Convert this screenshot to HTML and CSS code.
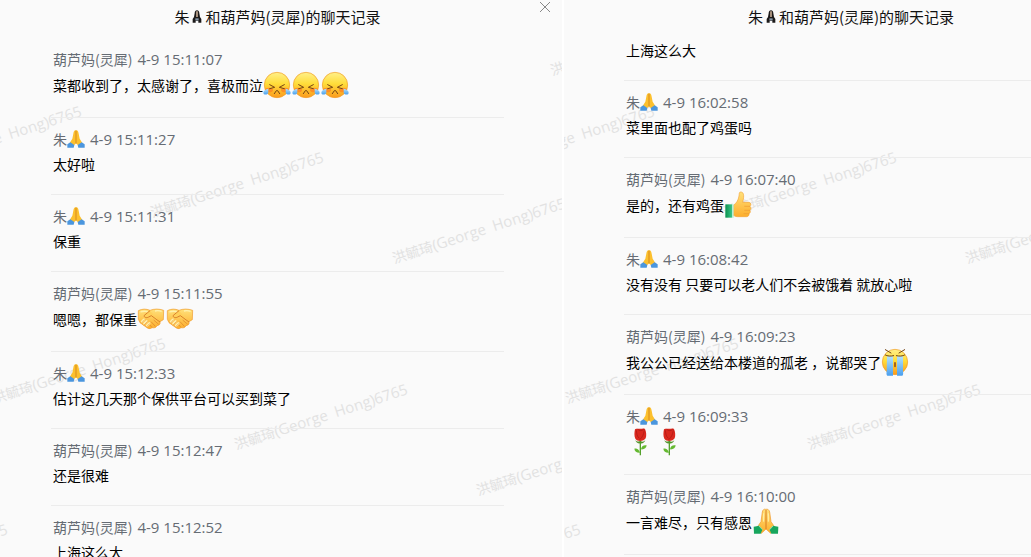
FILE: index.html
```html
<!DOCTYPE html>
<html lang="zh-CN">

<head>
    <meta charset="utf-8">
    <title>聊天记录</title>
    <link rel="stylesheet" href="styles.css">
</head>

<body>
    <!-- emoji sprites -->
    <svg class="sprites" aria-hidden="true">
        <defs>
            <linearGradient id="face" x1="0" y1="0" x2="0" y2="1">
                <stop offset="0" stop-color="#fff08a" />
                <stop offset=".45" stop-color="#ffdd3a" />
                <stop offset="1" stop-color="#fb9a1c" />
            </linearGradient>
            <linearGradient id="skin" x1="0" y1="0" x2="0" y2="1">
                <stop offset="0" stop-color="#ffe07a" />
                <stop offset="1" stop-color="#fdae2c" />
            </linearGradient>
            <linearGradient id="tear" x1="0" y1="0" x2="0" y2="1">
                <stop offset="0" stop-color="#b4e2fb" />
                <stop offset="1" stop-color="#4a9fee" />
            </linearGradient>
            <linearGradient id="sleeve" x1="0" y1="0" x2="1" y2="0">
                <stop offset="0" stop-color="#0a9250" />
                <stop offset="1" stop-color="#3cc487" />
            </linearGradient>

            <symbol id="weep" viewBox="0 0 84 84">
                <circle cx="42" cy="42" r="38" fill="url(#face)" stroke="#f09a24" stroke-width="2" />
                <ellipse cx="18" cy="57" rx="12" ry="7" fill="#ff7a22" opacity=".7" />
                <ellipse cx="66" cy="57" rx="12" ry="7" fill="#ff7a22" opacity=".7" />
                <path d="M20 41l15 8-15 4M64 41l-15 8 15 4" fill="none" stroke="#754413" stroke-width="3" stroke-linecap="round" />
                <path d="M34 68l6-9h4l6 9" fill="none" stroke="#754413" stroke-width="3" stroke-linecap="round" />
                <path d="M16 53C8 54 1 59 1 65c0 8 13 7 15 0z" fill="url(#tear)" />
                <path d="M68 53c8 1 15 6 15 12 0 8-13 7-15 0z" fill="url(#tear)" />
            </symbol>

            <symbol id="sob" viewBox="0 0 84 84">
                <circle cx="42" cy="42" r="38" fill="url(#face)" stroke="#f09a24" stroke-width="2" />
                <path d="M18 25h18v58H19c-3-2-3-8-2-14zM48 25h18v44c1 6 1 12-2 14H48z" fill="url(#tear)" />
                <path d="M13 5l17 10M71 5L54 15" fill="none" stroke="#754413" stroke-width="3" stroke-linecap="round" />
                <path d="M13 21c5 4 18 4 25 2M71 21c-5 4-18 4-25 2" fill="none" stroke="#754413" stroke-width="3" stroke-linecap="round" />
                <rect x="39" y="42" width="6" height="16" rx="3" fill="#a5651a" />
            </symbol>

            <symbol id="shake" viewBox="0 0 84 84">
                <path d="M4 17c12-6 23-6 35-1 13-5 27-5 41 0l-1 28-10 6c2 8-3 11-9 12-3 7-10 7-15 6-6 5-12 3-18-2L9 53 4 43z" fill="url(#skin)" stroke="#f09a2c" stroke-width="2" />
                <path d="M39 17L22 31c-2 6 6 9 13 5l8-4 26 19" fill="#ffd05b" stroke="#d9802a" stroke-width="3" stroke-linejoin="round" />
                <path d="M51 46l13 11M43 51l11 12M35 56l9 10" fill="none" stroke="#d9802a" stroke-width="2" stroke-linecap="round" />
                <path d="M15 50l6-6M22 56l7-7M30 62l7-7" fill="none" stroke="#fff0ad" stroke-width="7" stroke-linecap="round" />
                <path d="M13 55l11-12M20 61l12-12M28 66l11-11" fill="none" stroke="#e8963a" stroke-width="2" />
                <path d="M10 21c8-3 15-3 22-1M54 18c8-2 14-1 20 1" fill="none" stroke="#fff1ae" stroke-width="4" />
            </symbol>

            <symbol id="thumb" viewBox="0 0 84 84">
                <path d="M28 43c9-6 15-15 17-28 1-7 0-12 5-12 9 0 11 10 7 27l-1 4h19c7 2 7 9 3 12 4 3 4 9 0 12 2 4 1 8-3 10 1 5-2 8-7 9H40c-6 0-9-3-13-4z" fill="url(#skin)" stroke="#f3a436" stroke-width="2" />
                <path d="M62 46h15M62 58h15M60 68h14" stroke="#ec9a34" stroke-width="2" stroke-linecap="round" />
                <path d="M4 40h20v40H4z" fill="url(#sleeve)" />
                <path d="M24 40h5v40h-5z" fill="#b8ecd2" />
            </symbol>

            <symbol id="pray" viewBox="0 0 84 84">
                <path d="M41 4c-5-2-9 2-10 8l-4 29-13 19 14 16 14-13 14 13 14-16-13-19-4-29c-1-6-6-10-12-8z" fill="url(#skin)" stroke="#ee9526" stroke-width="2" />
                <path d="M42 6v57" stroke="#d87a20" stroke-width="3" />
                <path d="M35 16v25M49 16v25" stroke="#fff0b0" stroke-width="3" />
                <path d="M5 56l17-3 9 12-5 12H6z" fill="#17a65d" />
                <path d="M79 56l-17-3-9 12 5 12h20z" fill="#17a65d" />
                <path d="M20 53l11 12M64 53L53 65" stroke="#8ee0b6" stroke-width="3" />
            </symbol>

            <symbol id="pray-blue" viewBox="0 0 54 54">
                <path d="M27 1c-5-1-7 4-8 10l-3 15-8 13 11 9 8-8 8 8 11-9-8-13-3-15c-1-6-3-11-8-10z" fill="#fcc02e" />
                <path d="M27 2v39" stroke="#d78a1c" stroke-width="3" />
                <path d="M1 43l9-6 12 8-2 8H1zM53 43l-9-6-12 8 2 8h19z" fill="#4b96de" />
            </symbol>

            <symbol id="pray-mono" viewBox="0 0 30 39">
                <path d="M15 1c-4 0-7 3-7 9L6 21 2 27v11h9v-6h8v6h9V27l-4-6-2-11c0-6-3-9-7-9z" fill="#1c1a1a" />
                <path d="M15 4v17" stroke="#a58f7c" stroke-width="6" />
                <path d="M10 25h10v6H10z" fill="#8496a8" />
            </symbol>

            <symbol id="rose" viewBox="0 0 84 84">
                <path d="M43 38v44" stroke="#55a12c" stroke-width="4" />
                <path d="M42 74c-3-10-10-14-17-12 1 9 8 13 17 12zM45 64c1-9 8-14 17-12-1 8-7 13-17 12z" fill="#65b931" />
                <path d="M27 4c5-3 8-1 12-2 7 2 12-2 18 1 4 9 5 20 2 28-5 9-25 11-31 1-4-8-3-20-1-28z" fill="#da281e" />
                <path d="M31 7c1 10 2 18 9 24M55 7c-2 13-6 21-14 28M35 4c6 5 13 5 18 0" fill="none" stroke="#a81713" stroke-width="2" />
                <path d="M28 36c5 6 10 6 15 2 5 4 10 5 15-2-2 8-8 11-15 10-7 1-13-2-15-10z" fill="#53952c" />
            </symbol>
        </defs>
    </svg>

    <main class="records">
        <section class="panel">
            <div class="watermarks" aria-hidden="true">
                <span class="mark mark-a">洪毓琦<span class="latin">(George&nbsp; Hong)6765</span></span>
                <span class="mark mark-b">洪毓琦<span class="latin">(George&nbsp; Hong)6765</span></span>
                <span class="mark mark-c">洪毓琦<span class="latin">(George&nbsp; Hong)6765</span></span>
                <span class="mark mark-d">洪毓琦<span class="latin">(George&nbsp; Hong)6765</span></span>
                <span class="mark mark-e">洪毓琦<span class="latin">(George&nbsp; Hong)6765</span></span>
                <span class="mark mark-f">洪毓琦<span class="latin">(George&nbsp; Hong)6765</span></span>
                <span class="mark mark-g">洪毓琦<span class="latin">(George&nbsp; Hong)6765</span></span>
                <span class="mark mark-h">洪毓琦<span class="latin">(George&nbsp; Hong)6765</span></span>
            </div>
            <button class="close" type="button" aria-label="关闭">
                <svg viewBox="0 0 12 12"><path d="M1 1l10 10M11 1L1 11" /></svg>
            </button>
            <div class="panel-body">
                <h1 class="title">朱<svg class="title-emoji"><use href="#pray-mono" /></svg>和葫芦妈(灵犀)的聊天记录</h1>
                <ul class="list list-top">
                    <li class="item">
                        <div class="meta"><span>葫芦妈(灵犀)</span><time>4-9 15:11:07</time></div>
                        <div class="message has-emoji">菜都收到了，太感谢了，喜极而泣<svg class="emoji"><use href="#weep" /></svg><svg class="emoji"><use href="#weep" /></svg><svg class="emoji"><use href="#weep" /></svg></div>
                    </li>
                    <li class="item">
                        <div class="meta"><span class="name">朱<svg class="name-emoji"><use href="#pray-blue" /></svg></span><time>4-9 15:11:27</time></div>
                        <div class="message">太好啦</div>
                    </li>
                    <li class="item">
                        <div class="meta"><span class="name">朱<svg class="name-emoji"><use href="#pray-blue" /></svg></span><time>4-9 15:11:31</time></div>
                        <div class="message">保重</div>
                    </li>
                    <li class="item">
                        <div class="meta"><span>葫芦妈(灵犀)</span><time>4-9 15:11:55</time></div>
                        <div class="message has-emoji">嗯嗯，都保重<svg class="emoji"><use href="#shake" /></svg><svg class="emoji"><use href="#shake" /></svg></div>
                    </li>
                    <li class="item">
                        <div class="meta"><span class="name">朱<svg class="name-emoji"><use href="#pray-blue" /></svg></span><time>4-9 15:12:33</time></div>
                        <div class="message">估计这几天那个保供平台可以买到菜了</div>
                    </li>
                    <li class="item">
                        <div class="meta"><span>葫芦妈(灵犀)</span><time>4-9 15:12:47</time></div>
                        <div class="message">还是很难</div>
                    </li>
                    <li class="item">
                        <div class="meta"><span>葫芦妈(灵犀)</span><time>4-9 15:12:52</time></div>
                        <div class="message">上海这么大</div>
                    </li>
                </ul>
            </div>
        </section>

        <section class="panel panel-wide">
            <div class="watermarks" aria-hidden="true">
                <span class="mark mark-a">洪毓琦<span class="latin">(George&nbsp; Hong)6765</span></span>
                <span class="mark mark-b">洪毓琦<span class="latin">(George&nbsp; Hong)6765</span></span>
                <span class="mark mark-c">洪毓琦<span class="latin">(George&nbsp; Hong)6765</span></span>
                <span class="mark mark-f">洪毓琦<span class="latin">(George&nbsp; Hong)6765</span></span>
                <span class="mark mark-g">洪毓琦<span class="latin">(George&nbsp; Hong)6765</span></span>
                <span class="mark mark-h">洪毓琦<span class="latin">(George&nbsp; Hong)6765</span></span>
            </div>
            <div class="panel-body">
                <h1 class="title">朱<svg class="title-emoji"><use href="#pray-mono" /></svg>和葫芦妈(灵犀)的聊天记录</h1>
                <ul class="list">
                    <li class="item item-cut">
                        <div class="message">上海这么大</div>
                    </li>
                    <li class="item">
                        <div class="meta"><span class="name">朱<svg class="name-emoji"><use href="#pray-blue" /></svg></span><time>4-9 16:02:58</time></div>
                        <div class="message">菜里面也配了鸡蛋吗</div>
                    </li>
                    <li class="item">
                        <div class="meta"><span>葫芦妈(灵犀)</span><time>4-9 16:07:40</time></div>
                        <div class="message has-emoji">是的，还有鸡蛋<svg class="emoji"><use href="#thumb" /></svg></div>
                    </li>
                    <li class="item">
                        <div class="meta"><span class="name">朱<svg class="name-emoji"><use href="#pray-blue" /></svg></span><time>4-9 16:08:42</time></div>
                        <div class="message">没有没有 只要可以老人们不会被饿着 就放心啦</div>
                    </li>
                    <li class="item">
                        <div class="meta"><span>葫芦妈(灵犀)</span><time>4-9 16:09:23</time></div>
                        <div class="message has-emoji">我公公已经送给本楼道的孤老 ，说都哭了<svg class="emoji"><use href="#sob" /></svg></div>
                    </li>
                    <li class="item">
                        <div class="meta"><span class="name">朱<svg class="name-emoji"><use href="#pray-blue" /></svg></span><time>4-9 16:09:33</time></div>
                        <div class="message has-emoji"><svg class="emoji"><use href="#rose" /></svg><svg class="emoji"><use href="#rose" /></svg></div>
                    </li>
                    <li class="item">
                        <div class="meta"><span>葫芦妈(灵犀)</span><time>4-9 16:10:00</time></div>
                        <div class="message has-emoji">一言难尽，只有感恩<svg class="emoji"><use href="#pray" /></svg></div>
                    </li>
                </ul>
            </div>
        </section>
    </main>
</body>

</html>
```
FILE: styles.css
```css
body {
    margin: 0;
    background-color: #fff;
    color: #111;
    font-family: "Noto Sans CJK SC", sans-serif;
    font-size: 14px;
    overflow: hidden;
}

.sprites {
    position: absolute;
    width: 0;
    height: 0;
}

.records {
    display: grid;
    grid-template-columns: 562fr 467fr;
    gap: 2px;
    height: 100vh;
}

.panel {
    position: relative;
    overflow: hidden;
    min-width: 0;
    background-color: #fafafa;
}

.panel-body {
    position: relative;
    padding: 0 58px 0 51px;
}

/* the second window runs past the right edge */
.panel-wide .panel-body {
    margin-right: -107px;
    padding: 0 60px;
}

.title {
    display: flex;
    justify-content: center;
    align-items: center;
    margin: 0;
    padding-bottom: 4px;
    height: 32px;
    font-size: 15px;
    font-weight: normal;
    white-space: nowrap;
}

.title-emoji {
    width: 10px;
    height: 13px;
    margin: 0 3px;
}

.close {
    position: absolute;
    z-index: 1;
    top: 0;
    right: 9px;
    padding: 1px 2px;
    border: none;
    background: none;
    cursor: pointer;
}

.close svg {
    display: block;
    width: 12px;
    height: 12px;
    fill: none;
    stroke: #888;
}

.list {
    margin: 0;
    padding: 0;
    list-style: none;
}

.list-top {
    padding-top: 2px;
}

.item {
    padding: 10px 2px 17px;
    border-bottom: 1px solid #ececec;
}

.item-cut {
    padding-top: 0;
}

.meta {
    display: flex;
    align-items: center;
    gap: 5px;
    height: 22px;
    color: #666c74;
}

.meta time {
    font-family: "Open Sans", sans-serif;
    font-size: 15px;
}

.name {
    display: flex;
    align-items: center;
}

.name-emoji {
    width: 18px;
    height: 18px;
}

.message {
    display: flex;
    align-items: center;
    height: 27px;
    color: #000;
    white-space: nowrap;
}

.has-emoji {
    height: 30px;
}

.emoji {
    width: 28px;
    height: 28px;
    margin-right: 1px;
}

/* watermark, tiled at an angle behind the messages */
.watermarks {
    position: absolute;
    top: 0;
    left: 0;
}

.panel-wide .watermarks {
    left: 9px;
}

.mark {
    position: absolute;
    color: #e2e2e2;
    line-height: 20px;
    white-space: nowrap;
    transform: rotate(-18deg);
    transform-origin: 7px 10px;
}

.latin {
    font-family: "Open Sans", sans-serif;
    font-size: 15px;
}

.mark-a {
    left: 150px;
    top: 200px;
}

.mark-b {
    left: 392px;
    top: 246px;
}

.mark-c {
    left: 234px;
    top: 432px;
}

.mark-d {
    left: 476px;
    top: 478px;
}

.mark-e {
    left: 550px;
    top: 58px;
}

.mark-f {
    left: -92px;
    top: 154px;
}

.mark-g {
    left: -8px;
    top: 386px;
}

.mark-h {
    left: -166px;
    top: 572px;
}
```
